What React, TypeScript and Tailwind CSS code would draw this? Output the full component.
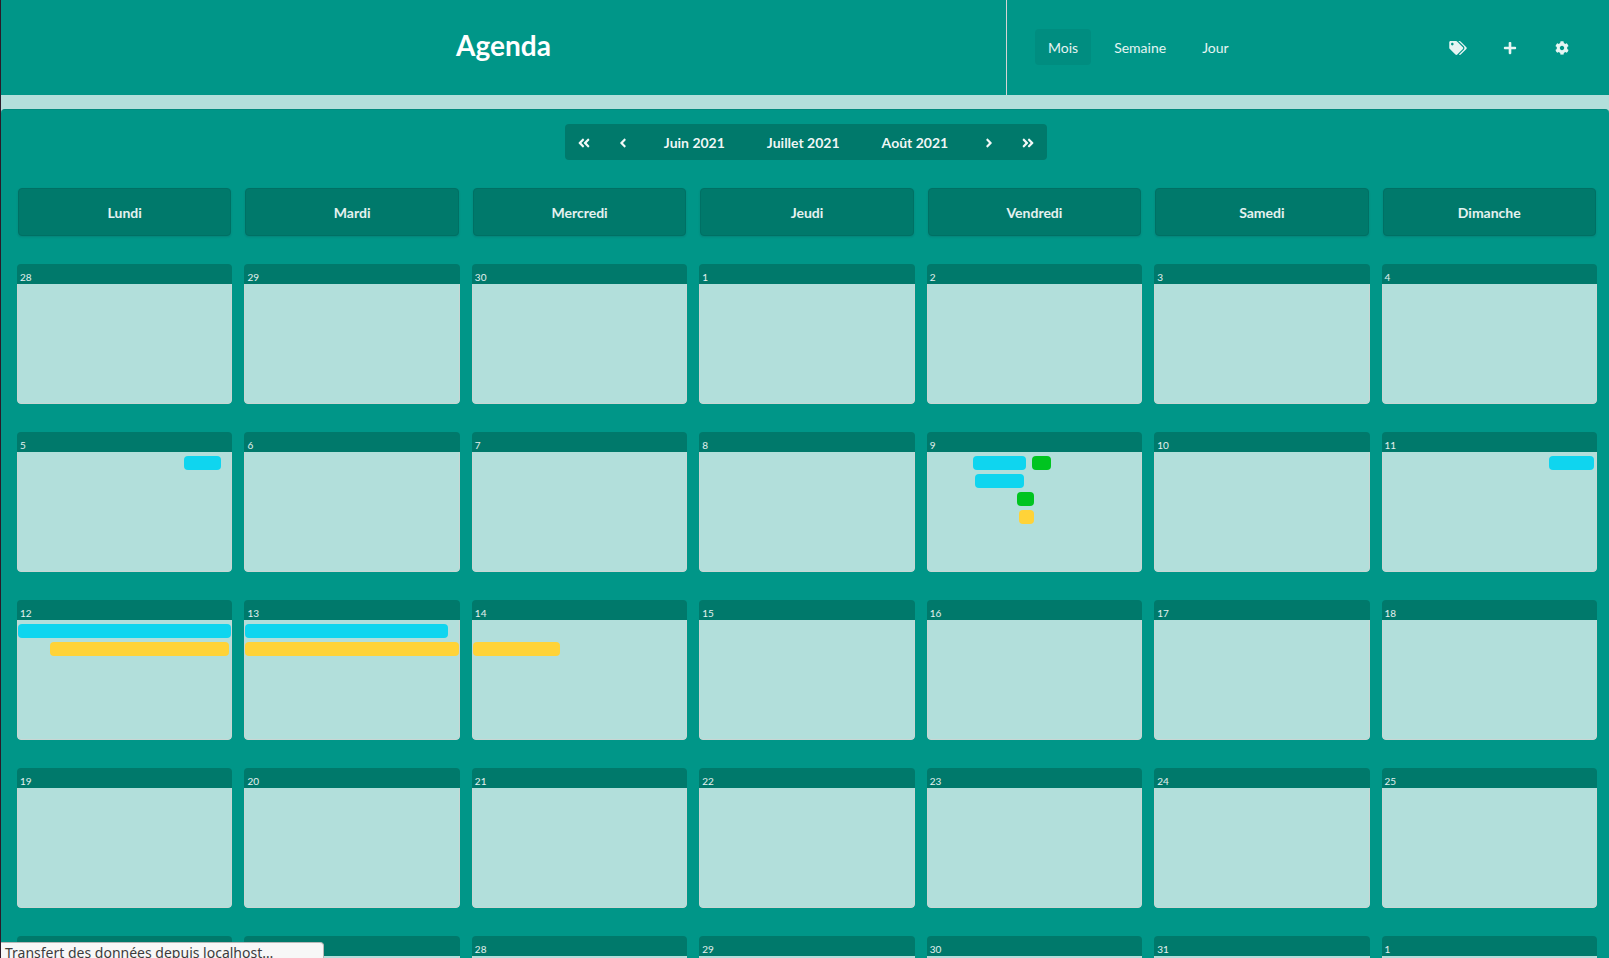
import { FaAngleDoubleLeft, FaAngleDoubleRight, FaAngleLeft, FaAngleRight, FaCog, FaPlus, FaTags } from 'react-icons/fa';

type Segment = { start: number; end: number; color: string };
type Day = { label: number; lanes?: Segment[][] };

const BLUE = 'bg-[#0fd5ef]';
const GREEN = 'bg-[#00c420]';
const YELLOW = 'bg-[#ffd338]';

const WEEKDAYS = ['Lundi', 'Mardi', 'Mercredi', 'Jeudi', 'Vendredi', 'Samedi', 'Dimanche'];

// Segment bounds are percentages of the day's inner width, keyed by week and weekday.
const LANES: Record<string, Segment[][]> = {
  '1-0': [[{ start: 78, end: 95.3, color: BLUE }]],
  '1-4': [
    [
      { start: 21.1, end: 46, color: BLUE },
      { start: 48.8, end: 57.7, color: GREEN },
    ],
    [{ start: 22.1, end: 45.1, color: BLUE }],
    [{ start: 41.8, end: 49.8, color: GREEN }],
    [{ start: 42.7, end: 49.8, color: YELLOW }],
  ],
  '1-6': [[{ start: 78, end: 99, color: BLUE }]],
  '2-0': [[{ start: 0, end: 100, color: BLUE }], [{ start: 15, end: 99, color: YELLOW }]],
  '2-1': [[{ start: 0, end: 95, color: BLUE }], [{ start: 0, end: 100, color: YELLOW }]],
  '2-2': [[], [{ start: 0, end: 40.8, color: YELLOW }]],
};

const NUMBERS = [
  [28, 29, 30, 1, 2, 3, 4],
  [5, 6, 7, 8, 9, 10, 11],
  [12, 13, 14, 15, 16, 17, 18],
  [19, 20, 21, 22, 23, 24, 25],
  [26, 27, 28, 29, 30, 31, 1],
];

const WEEKS: Day[][] = NUMBERS.map((week, w) =>
  week.map((label, d) => ({ label, lanes: LANES[`${w}-${d}`] })),
);

function Lane({ segments }: { segments: Segment[] }) {
  return (
    <div className="flex h-[14px]">
      {segments.map((s, i) => (
        <span
          key={i}
          className={`h-full shrink-0 rounded ${s.color}`}
          style={{
            marginLeft: `${s.start - (i > 0 ? segments[i - 1].end : 0)}%`,
            width: `${s.end - s.start}%`,
          }}
        />
      ))}
    </div>
  );
}

function DayCell({ day }: { day: Day }) {
  return (
    <div className="flex h-[140px] flex-col overflow-hidden rounded">
      <div className="h-5 shrink-0 bg-[#00796b] pl-[3px] pt-[3px] text-[10px] leading-5 text-white/90">{day.label}</div>
      <div className="flex grow flex-col gap-1 rounded-b border-x border-b border-[#c9d6d3] bg-[#b2dfdb] pt-1">
        {day.lanes?.map((segments, i) => <Lane key={i} segments={segments} />)}
      </div>
    </div>
  );
}

function ViewButton({ label, active = false }: { label: string; active?: boolean }) {
  return (
    <button
      type="button"
      aria-pressed={active}
      className={`h-9 rounded px-[13px] pt-[2px] text-[14px] leading-5 text-white/90 ${active ? 'bg-[#008d80]' : ''}`}
    >
      {label}
    </button>
  );
}

export default function App() {
  const iconNav = 'flex h-full w-[39px] items-center justify-center pt-px';
  const textNav = 'h-full px-[21px]';
  const tool = 'flex h-9 w-[52px] items-center justify-center pt-px';
  return (
    <div className="relative h-screen overflow-hidden border-l border-[#2c1b29] bg-[#b2dfdb] font-['Lato',sans-serif] text-white">
      <header className="grid h-[95px] grid-cols-[10fr_6fr] bg-[#009688]">
        <div className="flex items-center justify-center pb-[6px]">
          <h1 className="text-[28px] font-bold leading-9">Agenda</h1>
        </div>
        <div className="flex items-center justify-between border-l border-[#d4d4d5] pb-px pl-7 pr-[21px]">
          <nav className="flex gap-[10px]">
            <ViewButton label="Mois" active />
            <ViewButton label="Semaine" />
            <ViewButton label="Jour" />
          </nav>
          <div className="flex text-[14px] text-white/90">
            <button type="button" aria-label="Catégories" className={tool}>
              <FaTags className="h-[14px] w-[18px]" />
            </button>
            <button type="button" aria-label="Ajouter" className={tool}>
              <FaPlus />
            </button>
            <button type="button" aria-label="Paramètres" className={tool}>
              <FaCog />
            </button>
          </div>
        </div>
      </header>

      <main className="mt-[14px] rounded-t border-t border-[#008a7d] bg-[#009688] pl-4 pr-3 pt-[14px]">
        <div className="flex justify-center pr-[2px]">
          <nav className="flex h-9 rounded bg-[#00796b] text-[14px] font-bold text-white/95">
            <button type="button" aria-label="Année précédente" className={iconNav}><FaAngleDoubleLeft /></button>
            <button type="button" aria-label="Mois précédent" className={iconNav}><FaAngleLeft /></button>
            <button type="button" className={textNav}>Juin 2021</button>
            <button type="button" className={textNav}>Juillet 2021</button>
            <button type="button" className={textNav}>Août 2021</button>
            <button type="button" aria-label="Mois suivant" className={iconNav}><FaAngleRight /></button>
            <button type="button" aria-label="Année suivante" className={iconNav}><FaAngleDoubleRight /></button>
          </nav>
        </div>

        <div className="mt-7 grid grid-cols-7 gap-3">
          {WEEKDAYS.map((name) => (
            <div
              key={name}
              className="mx-px flex h-12 items-center justify-center rounded border border-[#007064] bg-[#00796b] text-[14px] font-bold text-white/90 shadow-[0_1px_2px_0_rgba(34,36,38,0.15)]"
            >
              {name}
            </div>
          ))}
        </div>

        <div className="mt-7 grid grid-cols-7 gap-x-3 gap-y-7">
          {WEEKS.flat().map((day, i) => <DayCell key={i} day={day} />)}
        </div>
      </main>

      <div
        role="status"
        className="absolute bottom-0 left-0 h-4 w-[323px] overflow-hidden whitespace-nowrap rounded-tr border-r border-t border-[#b8b8b8] bg-[#f7f7f7] pl-1 font-['Noto_Sans',sans-serif] text-[14px] leading-5 text-[#3c3c3c]"
      >
        Transfert des données depuis localhost…
      </div>
    </div>
  );
}
